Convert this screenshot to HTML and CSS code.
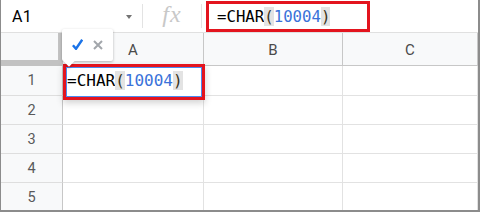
FILE: index.html
```html
<!DOCTYPE html>
<html>
<head>
<meta charset="utf-8">
<link rel="stylesheet" href="styles.css">
</head>
<body>
<div class="sheet">
  <div class="fbar">
    <div class="namebox"><span class="ref">A1</span><span class="caret"></span></div>
    <div class="sep"></div>
    <div class="fx">fx</div>
    <div class="sep"></div>
    <div class="finput">
      <div class="formula mark-bar"><span class="eq">=CHAR</span><span class="par">(</span><span class="num">10004</span><span class="par">)</span></div>
    </div>
  </div>
  <div class="grid">
    <div class="corner"></div>
    <div class="ch">A</div>
    <div class="ch">B</div>
    <div class="ch">C</div>

    <div class="rh">1</div>
    <div class="cell a1">
      <div class="editor">
        <div class="editor-inner"><span class="eq">=CHAR</span><span class="par">(</span><span class="num">10004</span><span class="par">)</span></div>
      </div>
      <div class="tip">
        <svg class="ico ico-check" width="11" height="11" viewBox="0 0 11 11"><path d="M0.9 6.2 L4 9.8 L10.2 0.7" fill="none" stroke="#1a73e8" stroke-width="2.4" stroke-linejoin="miter"/></svg>
        <svg class="ico" width="10" height="10" viewBox="0 0 10 10"><path d="M1 1 L9 9 M9 1 L1 9" fill="none" stroke="#a2a6ab" stroke-width="2"/></svg>
        <span class="tip-arrow"></span>
      </div>
    </div>
    <div class="cell"></div>
    <div class="cell"></div>

    <div class="rh">2</div><div class="cell"></div><div class="cell"></div><div class="cell"></div>
    <div class="rh">3</div><div class="cell"></div><div class="cell"></div><div class="cell"></div>
    <div class="rh">4</div><div class="cell"></div><div class="cell"></div><div class="cell"></div>
    <div class="rh">5</div><div class="cell"></div><div class="cell"></div><div class="cell"></div>
  </div>
</div>
</body>
</html>
```

FILE: styles.css
```css
* { box-sizing: border-box; }
html, body { margin: 0; padding: 0; background: #fff; }
body { font-family: Roboto, "Liberation Sans", sans-serif; }

.sheet {
  width: 480px;
  height: 212px;
  border-left: 1px solid #8c8c8c;
  border-right: 2px solid #8c8c8c;
  border-bottom: 2px solid #8c8c8c;
  overflow: hidden;
  display: flex;
  flex-direction: column;
}

.fbar {
  height: 33px;
  flex: 0 0 33px;
  border-bottom: 1px solid #e0e0e0;
  display: flex;
  align-items: stretch;
}
.namebox {
  width: 141px;
  padding: 0 10px 0 11px;
  display: flex;
  align-items: center;
  justify-content: space-between;
}
.ref { font-size: 16px; color: #000; letter-spacing: 0.2px; }
.caret {
  width: 0; height: 0;
  border-left: 3.5px solid transparent;
  border-right: 3.5px solid transparent;
  border-top: 4px solid #737373;
  margin-top: 1px;
}
.sep { width: 1px; background: #e3e3e3; margin: 4px 0 4px; }
.fx {
  width: 58px;
  display: flex;
  align-items: center;
  justify-content: center;
  font-family: "Liberation Serif", serif;
  font-style: italic;
  font-size: 24px;
  color: #c8c8c8;
  letter-spacing: 1px;
  padding-bottom: 3px;
}
.finput { flex: 1; padding-left: 4px; }

.formula, .editor-inner {
  font-family: "DejaVu Sans Mono", "Liberation Mono", monospace;
  white-space: nowrap;
}
.mark-bar {
  margin-top: 1px;
  width: 164px;
  height: 31px;
  border: 3px solid #e3141e;
  padding: 3px 0 0 8px;
  font-size: 15.7px;
  line-height: 19px;
}
.eq { color: #000; }
.par { color: #3a3320; background: #e3e3e3; }
.num { color: #3a72d9; }

.grid {
  display: grid;
  grid-template-columns: 62px 141px 139px 1fr;
  grid-template-rows: 33px 30px 29px 29px 29px 29px;
}
.corner {
  background: #f8f9fa;
  border-right: 5px solid #c2c2c2;
  border-bottom: 6px solid #c2c2c2;
}
.ch {
  background: #f8f9fa;
  border-right: 1px solid #c7c7c7;
  border-bottom: 1px solid #c7c7c7;
  display: flex;
  align-items: center;
  justify-content: center;
  font-size: 15px;
  color: #4a4a4a;
  padding-top: 1px;
}
.rh {
  background: #f8f9fa;
  border-right: 1px solid #c7c7c7;
  border-bottom: 1px solid #dedede;
  display: flex;
  align-items: center;
  justify-content: center;
  font-size: 14.5px;
  color: #5a5a5a;
}
.cell {
  border-right: 1px solid #e2e2e2;
  border-bottom: 1px solid #e2e2e2;
}
.a1 { position: relative; }

.editor {
  position: absolute;
  left: 0;
  top: -2px;
  width: 142px;
  height: 36px;
  border: 3px solid #e3141e;
  background: #fff;
  box-shadow: 0 3px 7px rgba(0, 0, 0, 0.18);
  z-index: 2;
}
.editor-inner {
  height: 100%;
  border: 1px solid #4a8af0;
  padding: 3px 0 0 0;
  font-size: 16px;
  line-height: 19px;
}

.tip {
  position: absolute;
  left: -1px;
  top: -37px;
  width: 51px;
  height: 32px;
  background: #fff;
  border-radius: 2px;
  box-shadow: 0 1px 3px rgba(0, 0, 0, 0.28);
  display: flex;
  align-items: center;
  gap: 10px;
  padding: 0 0 0 10px;
  z-index: 3;
}
.ico { display: block; }
.ico-check { margin-top: -2px; }
.tip-arrow {
  position: absolute;
  left: 3px;
  bottom: -4px;
  width: 8px;
  height: 8px;
  background: #fff;
  transform: rotate(45deg);
  box-shadow: 2px 2px 2px rgba(0, 0, 0, 0.12);
}
```
